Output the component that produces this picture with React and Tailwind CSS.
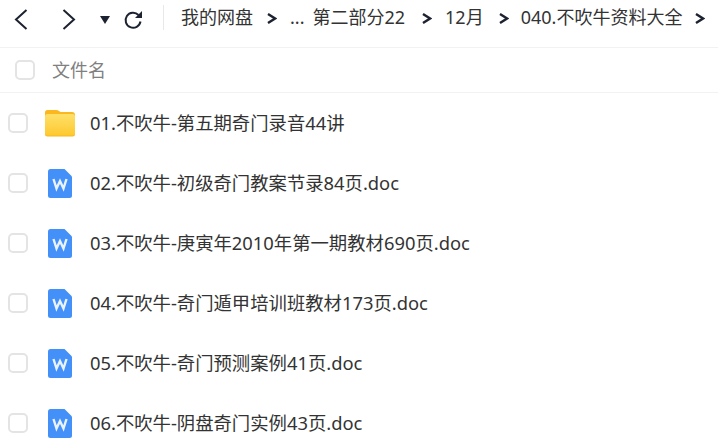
const files = [
  { n: "01.不吹牛-第五期奇门录音44讲", t: "folder" },
  { n: "02.不吹牛-初级奇门教案节录84页.doc" },
  { n: "03.不吹牛-庚寅年2010年第一期教材690页.doc" },
  { n: "04.不吹牛-奇门遁甲培训班教材173页.doc" },
  { n: "05.不吹牛-奇门预测案例41页.doc" },
  { n: "06.不吹牛-阴盘奇门实例43页.doc" },
];

const Chevron = () => (
  <svg width="10" height="11" viewBox="0 0 10 11" className="shrink-0 mt-[3px]" fill="none" stroke="#1c2230" strokeWidth="2.4">
    <path d="M1 1 L8 5.500 L1 10" />
  </svg>
);

const Box = () => <div className="w-5 h-5 rounded-[5px] border-2 border-[#e4e4e4] bg-white shrink-0" />;

const Folder = () => (
  <svg width="30" height="28" viewBox="0 0 30 28" className="shrink-0">
    <defs>
      <linearGradient id="fg" x1="0" y1="0" x2="0" y2="1">
        <stop offset="0" stopColor="#fee06a" />
        <stop offset="1" stopColor="#fdc92f" />
      </linearGradient>
    </defs>
    <path d="M0 3.500 Q0 1 2.500 1 L11 1 Q13 1 14 2 L15.500 3 L27 3 Q30 3 30 6 L30 25 Q30 27.500 27.500 27.500 L2.500 27.500 Q0 27.500 0 25 Z" fill="#fbb81e" />
    <path d="M0 7.500 Q0 5 2.500 5 L27.500 5 Q30 5 30 7.500 L30 24.500 Q30 26.500 27.500 26.500 L2.500 26.500 Q0 26.500 0 24.500 Z" fill="url(#fg)" />
  </svg>
);

const Word = () => (
  <svg width="24" height="29" viewBox="0 0 24 29" className="shrink-0">
    <path d="M2.500 0 L16.500 0 L24 7.500 L24 26.500 Q24 29 21.500 29 L2.500 29 Q0 29 0 26.500 L0 2.500 Q0 0 2.500 0 Z" fill="#4490f9" />
    <path d="M5.500 10 L8.500 19.500 L12 12 L15.500 19.500 L18.500 10" fill="none" stroke="#e9f2ff" strokeWidth="2.400" />
  </svg>
);

export default function App() {
  return (
    <div className="w-[718px] h-[444px] overflow-hidden bg-white text-[#333] font-['Noto_Sans','Noto_Sans_CJK_SC',sans-serif]">
      <div className="h-12 border-b border-[#f2f2f2] flex items-center pb-[8px]">
        <svg width="14" height="22" viewBox="0 0 14 22" className="ml-[14px] shrink-0" fill="none" stroke="#1c2230" strokeWidth="2"><path d="M12.500 1 L2 10.500 L12.500 20" /></svg>
        <svg width="14" height="22" viewBox="0 0 14 22" className="ml-[34px] shrink-0" fill="none" stroke="#1c2230" strokeWidth="2"><path d="M1.500 1 L12 10.500 L1.500 20" /></svg>
        <svg width="10" height="8" viewBox="0 0 10 8" className="ml-[24px] shrink-0" fill="#1c2230"><path d="M0 0 L10 0 L5 8 Z" /></svg>
        <svg width="20" height="20" viewBox="0 0 20 20" className="ml-[13px] shrink-0" fill="none" stroke="#1c2230" strokeWidth="2">
          <path d="M15.500 5 A7.500 7.500 0 1 0 17.500 11.500" />
          <path d="M19 1 L19 8 L12 8 Z" fill="#1c2230" stroke="none" />
        </svg>
        <div className="w-px h-[25px] bg-[#e8e8e8] ml-[20px] shrink-0 -mt-[5px]" />
        <div className="flex items-center text-[18px] ml-[17px] whitespace-nowrap pb-[5px]">
          <span>我的网盘</span>
          <span className="ml-[14px]"><Chevron /></span>
          <span className="ml-[13px]">...</span>
          <span className="ml-[8px]">第二部分22</span>
          <span className="ml-[17px]"><Chevron /></span>
          <span className="ml-[13px]">12月</span>
          <span className="ml-[15px]"><Chevron /></span>
          <span className="ml-[12px]">040.不吹牛资料大全</span>
          <span className="ml-[13px]"><Chevron /></span>
        </div>
      </div>
      <div className="h-[45px] border-b border-[#f2f2f2] flex items-center pl-[15px] gap-[17px]">
        <Box />
        <span className="text-[18px] text-[#808080]">文件名</span>
      </div>
      <div>
        {files.map((f) => (
          <div key={f.n} className="h-[60px] flex items-center pl-2">
            <Box />
            <div className="w-[30px] ml-[17px] flex justify-center shrink-0">
              {f.t === "folder" ? <Folder /> : <Word />}
            </div>
            <span className="ml-[15px] text-[18.35px] whitespace-nowrap">{f.n}</span>
          </div>
        ))}
      </div>
    </div>
  );
}
